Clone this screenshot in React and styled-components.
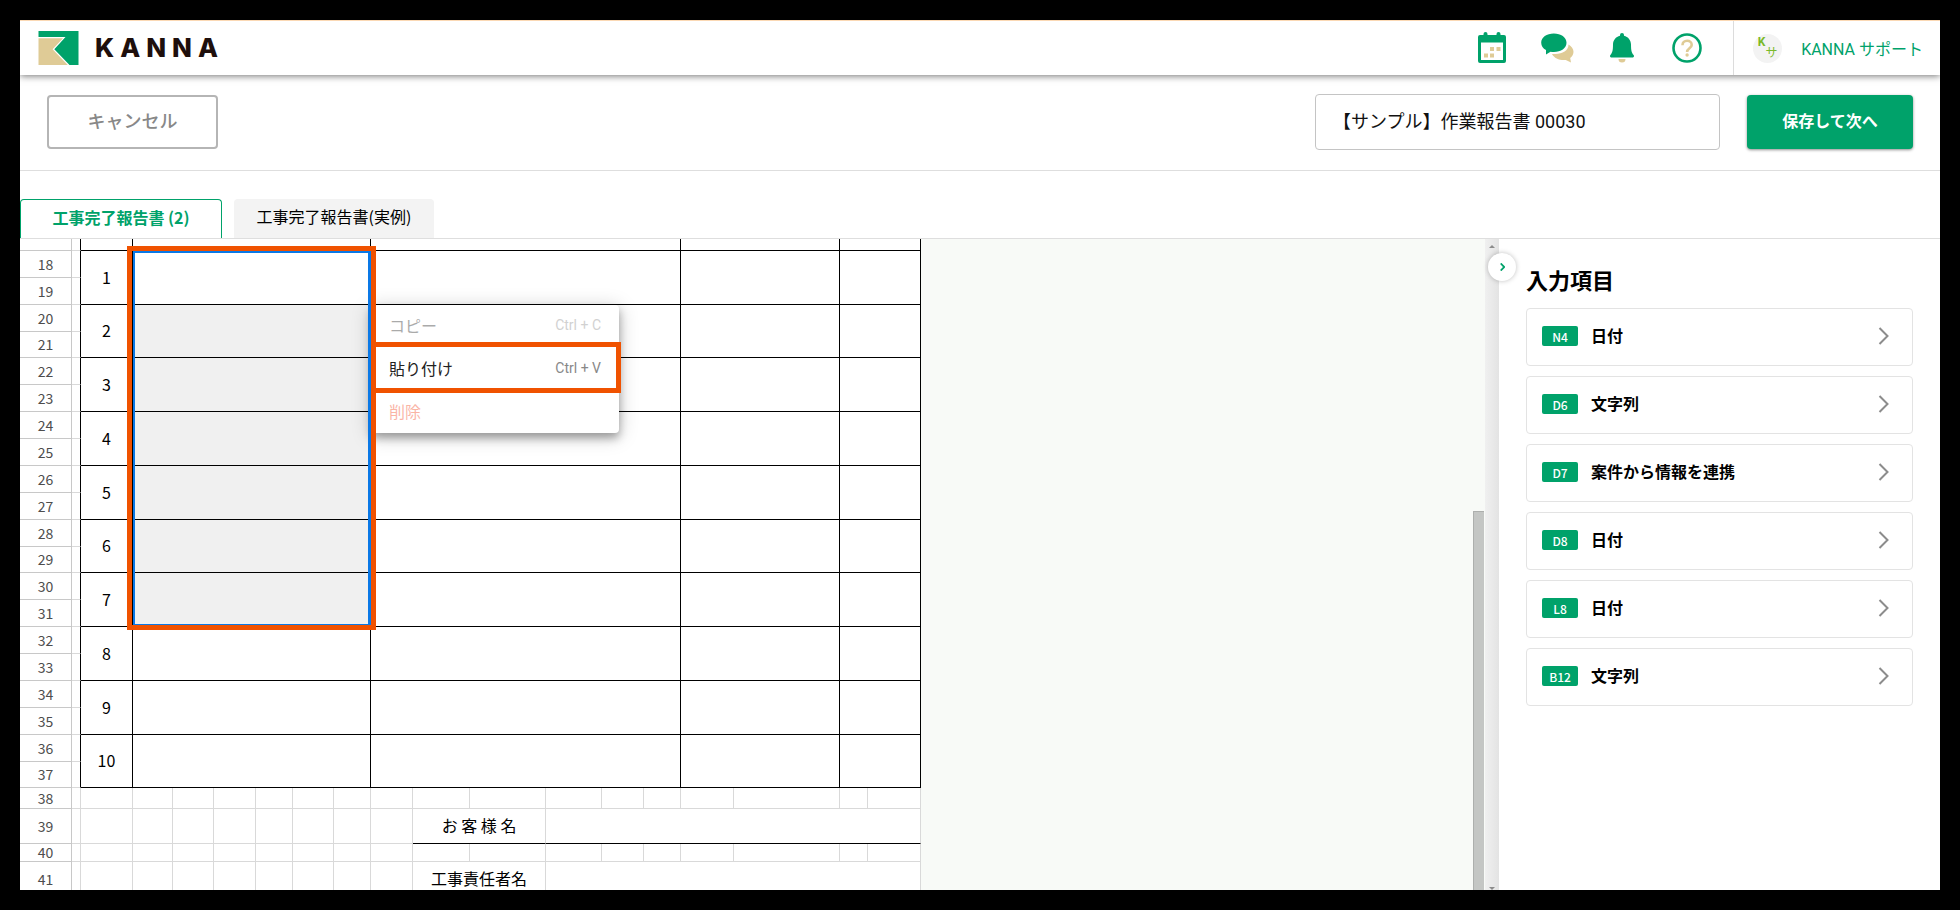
import React from 'react';
import styled, { createGlobalStyle, css } from 'styled-components';

const GREEN = '#00a26a';
const BEIGE = '#dfcb96';
const ORANGE = '#f05200';
const CJK = "'Noto Sans CJK JP', sans-serif";
const MIXED = "Roboto, 'Noto Sans CJK JP', sans-serif";

const GlobalStyle = createGlobalStyle`
    * {
        box-sizing: border-box;
    }
    body {
        margin: 0;
        background: #000;
        font-family: ${MIXED};
        font-size: 16px;
        color: #000;
    }
    button, input {
        font: inherit;
        color: inherit;
        margin: 0;
    }
`;

const Frame = styled.div`
    height: 100vh;
    padding: 20px;
    background: #000;
`;

const Page = styled.div`
    height: 100%;
    display: flex;
    flex-direction: column;
    overflow: hidden;
    background: #fff;
`;

/* ---------- header ---------- */

const Header = styled.header`
    flex: none;
    display: flex;
    align-items: center;
    height: 55px;
    padding-left: 18px;
    border-top: 1px solid #fbd9b5;
    background: #fff;
    box-shadow: 0 1px 7px rgba(0, 0, 0, 0.55);
    position: relative;
    z-index: 2;
`;

const Brand = styled.a`
    display: flex;
    align-items: center;
    gap: 16px;
    color: #1e0f0c;
    text-decoration: none;
`;

const BrandName = styled.span`
    font: 800 26px/34px Inter, sans-serif;
    letter-spacing: 6px;
`;

const HeaderIcons = styled.nav`
    display: flex;
    gap: 31px;
    margin-left: auto;
    padding-right: 29px;
`;

const IconButton = styled.button`
    display: flex;
    align-items: center;
    justify-content: center;
    width: 34px;
    height: 34px;
    padding: 0;
    border: 0;
    background: none;
`;

const User = styled.a`
    display: flex;
    align-items: center;
    gap: 19px;
    height: 100%;
    padding: 0 17px 0 19px;
    border-left: 1px solid #dcdcdc;
    color: ${GREEN};
    text-decoration: none;
    white-space: nowrap;
`;

const Avatar = styled.span`
    display: flex;
    justify-content: center;
    width: 29px;
    height: 29px;
    border-radius: 50%;
    background: #f3f3f3;
    color: #7ab929;
    font-size: 12px;
    line-height: 17px;
`;

const AvatarKana = styled.span`
    padding-top: 11px;
`;

/* ---------- toolbar ---------- */

const Toolbar = styled.div`
    flex: none;
    display: flex;
    align-items: center;
    gap: 27px;
    height: 96px;
    padding: 0 27px 2px;
    border-bottom: 1px solid #dedede;
`;

const CancelButton = styled.button`
    width: 171px;
    height: 54px;
    padding: 0 0 3px;
    margin-right: auto;
    border: 2px solid #b5b5b5;
    border-radius: 4px;
    background: #fff;
    color: #888;
    font-size: 18px;
    font-weight: 500;
`;

const TitleInput = styled.input`
    width: 405px;
    height: 56px;
    padding: 0 16px 3px 17px;
    border: 1px solid #c4c4c4;
    border-radius: 4px;
    font-size: 18px;
    color: #111;
`;

const SaveButton = styled.button`
    width: 166px;
    height: 54px;
    padding: 0 0 3px;
    border: 0;
    border-radius: 4px;
    background: ${GREEN};
    box-shadow: 0 1px 3px rgba(0, 0, 0, 0.45);
    color: #fff;
    font-weight: 700;
`;

/* ---------- tabs ---------- */

const Tabs = styled.div`
    flex: none;
    display: flex;
    align-items: flex-end;
    gap: 12px;
    height: 68px;
    border-bottom: 1px solid #dedede;
`;

const Tab = styled.button`
    width: 200px;
    height: 39px;
    padding: 0 0 5px;
    border: 0;
    border-radius: 4px 4px 0 0;
    background: #f3f3f3;
    font-family: ${CJK};
    ${props =>
        props.$active &&
        css`
            width: 202px;
            border: 1px solid ${GREEN};
            border-bottom: 0;
            background: #fff;
            color: ${GREEN};
            font-weight: 700;
        `}
`;

/* ---------- sheet ---------- */

const Body = styled.main`
    flex: 1;
    display: flex;
    min-height: 0;
`;

const Canvas = styled.div`
    flex: 1;
    display: flex;
    align-items: flex-start;
    justify-content: space-between;
    min-width: 0;
    overflow: hidden;
    background: #f8faf7;
    position: relative;
`;

const Sheet = styled.table`
    flex: none;
    width: 901px;
    table-layout: fixed;
    border-collapse: separate;
    border-spacing: 0;
    background: #fff;
    font-family: ${CJK};
`;

const Row = styled.tr`
    height: ${props => props.$height}px;
`;

const Cell = styled.td`
    padding: 0;
    border-right: 1px solid ${props => (props.$ruled || props.$ruledRight ? '#000' : '#d9d9d9')};
    border-bottom: 1px solid ${props => (props.$ruled || props.$ruledBottom ? '#000' : '#d9d9d9')};
    background: ${props => (props.$selected ? '#f0f0f0' : '#fff')};
    text-align: center;
    line-height: 16px;
    white-space: nowrap;

    &:not(:empty) {
        padding-bottom: 2px;
    }
`;

const RowHead = styled.th`
    padding: 0;
    border-right: 1px solid #c8c8c8;
    border-bottom: 1px solid #c8c8c8;
    color: #4d4d4d;
    font-size: 14px;
    font-weight: 400;
    line-height: 16px;

    &:not(:empty) {
        padding-bottom: 1px;
    }
`;

const Selection = styled.div`
    position: absolute;
    left: 107px;
    top: 7px;
    width: 249px;
    height: 384px;
    border: 5px solid ${ORANGE};
    z-index: 2;

    &::before {
        content: '';
        position: absolute;
        top: 0;
        right: 0;
        bottom: 0;
        left: 1px;
        border: solid #0a78e6;
        border-width: 2px 3px 1px 2px;
    }
`;

const Menu = styled.div`
    position: absolute;
    left: 351px;
    top: 66px;
    width: 248px;
    height: 128px;
    display: grid;
    grid-template-rows: repeat(3, 1fr);
    border-radius: 4px;
    background: #fff;
    box-shadow: 0 5px 8px rgba(0, 0, 0, 0.3), 0 3px 20px rgba(0, 0, 0, 0.22);
    z-index: 1;
`;

const MenuItem = styled.button`
    display: flex;
    align-items: center;
    justify-content: space-between;
    padding: 0 18px 2px;
    border: 0;
    background: none;
    color: ${props => (props.$danger ? '#f23c13' : '#222')};
    opacity: ${props => (props.disabled ? 0.38 : 1)};
`;

const Shortcut = styled.kbd`
    color: #888;
    font-family: ${MIXED};
    font-size: 14px;
`;

const Highlight = styled.div`
    position: absolute;
    left: 351px;
    top: 103px;
    width: 250px;
    height: 51px;
    border: 5px solid ${ORANGE};
    pointer-events: none;
    z-index: 3;
`;

const Track = styled.div`
    align-self: stretch;
    width: 12px;
    padding: 272px 1px 0 0;
`;

const Thumb = styled.div`
    height: 100%;
    border: solid #adafad;
    border-width: 1px 0 0 1px;
    background: #c4c6c4;
`;

/* ---------- side panel ---------- */

const Gutter = styled.div`
    flex: none;
    display: flex;
    flex-direction: column;
    align-items: center;
    justify-content: space-between;
    width: 14px;
    padding-top: 5px;
    background: linear-gradient(to right, #f0f0f0, #e3e3e3);
`;

const Panel = styled.aside`
    flex: none;
    width: 441px;
    padding: 22px 27px;
    background: #fff;
    font-family: ${CJK};
    position: relative;
`;

const PanelToggle = styled.button`
    position: absolute;
    left: -11px;
    top: 14px;
    display: flex;
    align-items: center;
    justify-content: center;
    width: 28px;
    height: 28px;
    padding: 0;
    border: 0;
    border-radius: 50%;
    background: #fff;
    box-shadow: 0 0 5px rgba(0, 0, 0, 0.25);
`;

const PanelTitle = styled.h2`
    margin: 0 0 11px;
    font-size: 22px;
    font-weight: 700;
    line-height: 36px;
`;

const FieldList = styled.div`
    display: flex;
    flex-direction: column;
    gap: 10px;
`;

const Field = styled.button`
    display: flex;
    align-items: center;
    gap: 13px;
    height: 58px;
    padding: 0 23px 2px 15px;
    border: 1px solid #e3e3e3;
    border-radius: 4px;
    background: #fff;
    text-align: left;
`;

const Badge = styled.span`
    width: 36px;
    height: 20px;
    border-radius: 2px;
    background: ${GREEN};
    color: #fff;
    font-size: 12px;
    font-weight: 500;
    line-height: 21px;
    text-align: center;
`;

const FieldName = styled.span`
    flex: 1;
    padding-bottom: 2px;
    font-weight: 700;
    line-height: 20px;
`;

const Logo = () => (
    <svg width="41" height="34" viewBox="0 0 41 34" aria-hidden="true">
        <path d="M.5 0H40.500V34H31.500L16.300 18.200 27.500 6H.5z" fill={GREEN} />
        <path d="M.5 7.300H25L14.600 18.200 29.800 34H.5z" fill={BEIGE} />
    </svg>
);

const CalendarIcon = () => (
    <svg width="28" height="32" viewBox="0 0 28 32" aria-hidden="true">
        <path
            d="M2 3h3.500V2a2 2 0 0 1 4 0v1h9V2a2 2 0 0 1 4 0v1H26a2 2 0 0 1 2 2v24a2 2 0 0 1-2 2H2a2 2 0 0 1-2-2V5a2 2 0 0 1 2-2zM3 10.500V28h22V10.500z"
            fill={GREEN}
            fillRule="evenodd"
        />
        <path d="M12 15h4v4h-4zM18.500 15h4v4h-4zM6 21.500h4v4H6zM12 21.500h4v4h-4z" fill={BEIGE} />
    </svg>
);

const ChatIcon = () => (
    <svg width="33" height="30" viewBox="0 0 33 30" aria-hidden="true">
        <path
            d="M27.500 11.500c3 1.700 5 4.300 5 7.300 0 2.500-1.200 4.600-3.300 6.200l.8 4.500-5.200-2.500c-6 .6-11.500-1.600-13.800-6h3.500c7 0 13-3.500 13-9.500z"
            fill={BEIGE}
        />
        <path
            d="M12.800.5C20 .5 25.500 4.400 25.500 9.700S20 19 12.800 19c-1.200 0-2.300-.1-3.300-.3L5 21.500v-4.400C2 15.400.2 12.800.2 9.700.2 4.400 5.700.5 12.800.5z"
            fill={GREEN}
        />
    </svg>
);

const BellIcon = () => (
    <svg width="24" height="30" viewBox="0 0 24 30" aria-hidden="true">
        <path
            d="M12 0a2 2 0 0 1 2 2v.7c4.200 1 7 4.500 7 8.800 0 6 .7 8.500 2.600 10.400.9 1 .3 2.600-1.100 2.600h-21c-1.400 0-2-1.600-1.100-2.600C2.300 20 3 17.500 3 11.500c0-4.300 2.800-7.800 7-8.800V2a2 2 0 0 1 2-2z"
            fill={GREEN}
        />
        <path d="M8.500 26h7a3.500 3.500 0 0 1-7 0z" fill={BEIGE} />
    </svg>
);

const HelpIcon = () => (
    <svg width="30" height="30" viewBox="0 0 30 30" fill="none" aria-hidden="true">
        <circle cx="15" cy="15" r="13.500" stroke={GREEN} strokeWidth="2.600" />
        <path
            d="M10.500 12.200c0-2.600 2-4.400 4.600-4.400 2.700 0 4.600 1.700 4.600 4.100 0 3.300-4.600 3.400-4.600 7"
            stroke={BEIGE}
            strokeWidth="2.600"
        />
        <circle cx="15.100" cy="22" r="1.700" fill={BEIGE} />
    </svg>
);

const Chevron = ({ width, height, color, stroke }) => (
    <svg width={width} height={height} viewBox="0 0 11 18" fill="none" aria-hidden="true">
        <path d="M1.500 1L9.500 9l-8 8" stroke={color} strokeWidth={stroke} />
    </svg>
);

const Arrow = ({ down }) => (
    <svg width="6" height="4" viewBox="0 0 6 4" aria-hidden="true">
        <path d={down ? 'M0 1h6L3 4z' : 'M0 4h6L3 1z'} fill="#8c8c8c" />
    </svg>
);

const columns = [52, 9, 52, 40, 41, 42, 37, 41, 37, 42, 57, 76, 56, 42, 37, 53, 106, 28, 53];

// [upper row height, lower row height] of every numbered line, from row 18 on
const lines = [
    [27, 27],
    [27, 26],
    [27, 27],
    [27, 27],
    [27, 27],
    [27, 26],
    [27, 27],
    [27, 27],
    [27, 27],
    [27, 26]
];

const fields = [
    { cell: 'N4', name: '日付' },
    { cell: 'D6', name: '文字列' },
    { cell: 'D7', name: '案件から情報を連携' },
    { cell: 'D8', name: '日付' },
    { cell: 'L8', name: '日付' },
    { cell: 'B12', name: '文字列' }
];

const blanks = count => Array.from({ length: count }, (_, i) => <Cell key={i} />);

const ReportSheet = () => (
    <Sheet>
        <colgroup>
            {columns.map((width, i) => (
                <col key={i} style={{ width }} />
            ))}
        </colgroup>
        <tbody>
            <Row $height={12}>
                <RowHead />
                <Cell $ruledRight />
                <Cell $ruled />
                <Cell $ruled colSpan={6} />
                <Cell $ruled colSpan={6} />
                <Cell $ruled colSpan={2} />
                <Cell $ruled colSpan={2} />
            </Row>
            {lines.map(([upper, lower], i) => (
                <React.Fragment key={i}>
                    <Row $height={upper}>
                        <RowHead scope="row">{18 + i * 2}</RowHead>
                        <Cell $ruledRight />
                        <Cell $ruled rowSpan={2}>
                            {i + 1}
                        </Cell>
                        <Cell $ruled $selected={i > 0 && i < 7} rowSpan={2} colSpan={6} />
                        <Cell $ruled rowSpan={2} colSpan={6} />
                        <Cell $ruled rowSpan={2} colSpan={2} />
                        <Cell $ruled rowSpan={2} colSpan={2} />
                    </Row>
                    <Row $height={lower}>
                        <RowHead scope="row">{19 + i * 2}</RowHead>
                        <Cell $ruledRight />
                    </Row>
                </React.Fragment>
            ))}
            <Row $height={21}>
                <RowHead scope="row">38</RowHead>
                {blanks(18)}
            </Row>
            <Row $height={35}>
                <RowHead scope="row">39</RowHead>
                {blanks(9)}
                <Cell $ruledBottom colSpan={2}>
                    お 客 様 名
                </Cell>
                <Cell $ruledBottom colSpan={7} />
            </Row>
            <Row $height={18}>
                <RowHead scope="row">40</RowHead>
                {blanks(18)}
            </Row>
            <Row $height={35}>
                <RowHead scope="row">41</RowHead>
                {blanks(9)}
                <Cell $ruledBottom colSpan={2}>
                    工事責任者名
                </Cell>
                <Cell $ruledBottom colSpan={7} />
            </Row>
        </tbody>
    </Sheet>
);

const App = () => (
    <Frame>
        <GlobalStyle />
        <Page>
            <Header>
                <Brand href="#">
                    <Logo />
                    <BrandName>KANNA</BrandName>
                </Brand>
                <HeaderIcons>
                    <IconButton aria-label="カレンダー">
                        <CalendarIcon />
                    </IconButton>
                    <IconButton aria-label="チャット">
                        <ChatIcon />
                    </IconButton>
                    <IconButton aria-label="お知らせ">
                        <BellIcon />
                    </IconButton>
                    <IconButton aria-label="ヘルプ">
                        <HelpIcon />
                    </IconButton>
                </HeaderIcons>
                <User href="#">
                    <Avatar>
                        <b>K</b>
                        <AvatarKana>サ</AvatarKana>
                    </Avatar>
                    KANNA サポート
                </User>
            </Header>
            <Toolbar>
                <CancelButton>キャンセル</CancelButton>
                <TitleInput aria-label="帳票名" defaultValue="【サンプル】作業報告書 00030" />
                <SaveButton>保存して次へ</SaveButton>
            </Toolbar>
            <Tabs role="tablist">
                <Tab role="tab" aria-selected="true" $active>
                    工事完了報告書 (2)
                </Tab>
                <Tab role="tab" aria-selected="false">
                    工事完了報告書(実例)
                </Tab>
            </Tabs>
            <Body>
                <Canvas>
                    <ReportSheet />
                    <Track>
                        <Thumb />
                    </Track>
                    <Selection />
                    <Menu role="menu">
                        <MenuItem role="menuitem" disabled>
                            コピー <Shortcut>Ctrl + C</Shortcut>
                        </MenuItem>
                        <MenuItem role="menuitem">
                            貼り付け <Shortcut>Ctrl + V</Shortcut>
                        </MenuItem>
                        <MenuItem role="menuitem" disabled $danger>
                            削除
                        </MenuItem>
                    </Menu>
                    <Highlight />
                </Canvas>
                <Gutter>
                    <Arrow />
                    <Arrow down />
                </Gutter>
                <Panel>
                    <PanelToggle aria-label="入力項目を閉じる">
                        <Chevron width={5} height={8} color={GREEN} stroke={4} />
                    </PanelToggle>
                    <PanelTitle>入力項目</PanelTitle>
                    <FieldList>
                        {fields.map(field => (
                            <Field key={field.cell}>
                                <Badge>{field.cell}</Badge>
                                <FieldName>{field.name}</FieldName>
                                <Chevron width={11} height={18} color="#8c8c8c" stroke={2} />
                            </Field>
                        ))}
                    </FieldList>
                </Panel>
            </Body>
        </Page>
    </Frame>
);

export default App;
